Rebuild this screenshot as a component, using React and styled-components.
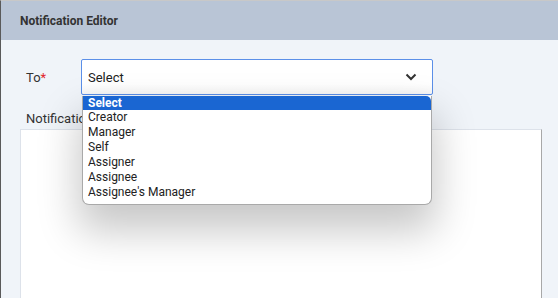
import React from "react";
import styled, { createGlobalStyle } from "styled-components";

const GlobalStyle = createGlobalStyle`
  html, body {
    margin: 0;
    padding: 0;
    overflow: hidden;
  }
  body {
    font-family: Roboto, "Liberation Sans", Arial, sans-serif;
    color: #333;
  }
`;

const Frame = styled.div`
  width: 558px;
  height: 298px;
  box-sizing: border-box;
  border-left: 1px solid #5a5a5a;
  border-top: 1px solid #c8c8c8;
  background: #f0f4f9;
  display: flex;
  flex-direction: column;
  overflow: hidden;
`;

const Header = styled.div`
  height: 39px;
  flex-shrink: 0;
  background: #b9c5d6;
  display: flex;
  align-items: center;
  padding-left: 19px;
  font-size: 12px;
  font-weight: 700;
  color: #333;
`;

const Body = styled.div`
  flex: 1;
  display: flex;
  flex-direction: column;
  padding: 19px 16px 0 19px;
`;

const Row = styled.div`
  display: flex;
  align-items: center;
  padding-left: ${(p) => p.$indent || 0}px;
`;

const Label = styled.div`
  width: 55px;
  font-size: 13px;
  color: #333;
  span {
    color: #e0252b;
  }
`;

const SelectWrap = styled.div`
  position: relative;
  width: 352px;
`;

const SelectBox = styled.div`
  height: 36px;
  box-sizing: border-box;
  border: 1px solid #5b8fe8;
  border-radius: 2px;
  background: linear-gradient(#ffffff 70%, #f6f6f6);
  display: flex;
  align-items: center;
  justify-content: space-between;
  padding: 0 15px 0 6px;
  font-size: 13px;
  color: #222;
`;

const Menu = styled.ul`
  position: absolute;
  top: 37px;
  left: 1px;
  width: 350px;
  box-sizing: border-box;
  margin: 0;
  padding: 0 0 4px;
  list-style: none;
  background: #fff;
  border: 1px solid #a9a9a9;
  border-top: none;
  border-radius: 0 0 7px 7px;
  box-shadow: 0 22px 40px 4px rgba(0, 0, 0, 0.22);
  z-index: 2;
`;

const Option = styled.li`
  height: ${(p) => (p.$active ? 14 : 15)}px;
  line-height: ${(p) => (p.$active ? 14 : 15)}px;
  padding-left: 5px;
  font-size: 12px;
  font-weight: ${(p) => (p.$active ? 700 : 400)};
  color: ${(p) => (p.$active ? "#fff" : "#222")};
  background: ${(p) => (p.$active ? "#1a66d2" : "transparent")};
  border-radius: ${(p) => (p.$active ? "0 5px 0 0" : "0")};
`;

const FieldLabel = styled.div`
  margin-top: 16px;
  padding-left: 6px;
  font-size: 13px;
  color: #333;
  height: 16px;
  line-height: 16px;
`;

const TextArea = styled.div`
  margin-top: 2px;
  flex: 1;
  background: #fff;
  border: 1px solid #dde2ea;
  border-right: 1px solid #a8a8a8;
  border-bottom: none;
`;

const options = [
  "Select",
  "Creator",
  "Manager",
  "Self",
  "Assigner",
  "Assignee",
  "Assignee's Manager",
];

export default function App() {
  return (
    <>
      <GlobalStyle />
      <Frame>
        <Header>Notification Editor</Header>
        <Body>
          <Row $indent={6}>
            <Label>
              To<span>*</span>
            </Label>
            <SelectWrap>
              <SelectBox>
                Select
                <svg width="12" height="8" viewBox="0 0 12 8">
                  <path
                    d="M1.5 1.5 L6 6 L10.5 1.5"
                    fill="none"
                    stroke="#333"
                    strokeWidth="2"
                  />
                </svg>
              </SelectBox>
              <Menu>
                {options.map((o, i) => (
                  <Option key={o} $active={i === 0}>
                    {o}
                  </Option>
                ))}
              </Menu>
            </SelectWrap>
          </Row>
          <FieldLabel>Notification Message</FieldLabel>
          <TextArea />
        </Body>
      </Frame>
    </>
  );
}
